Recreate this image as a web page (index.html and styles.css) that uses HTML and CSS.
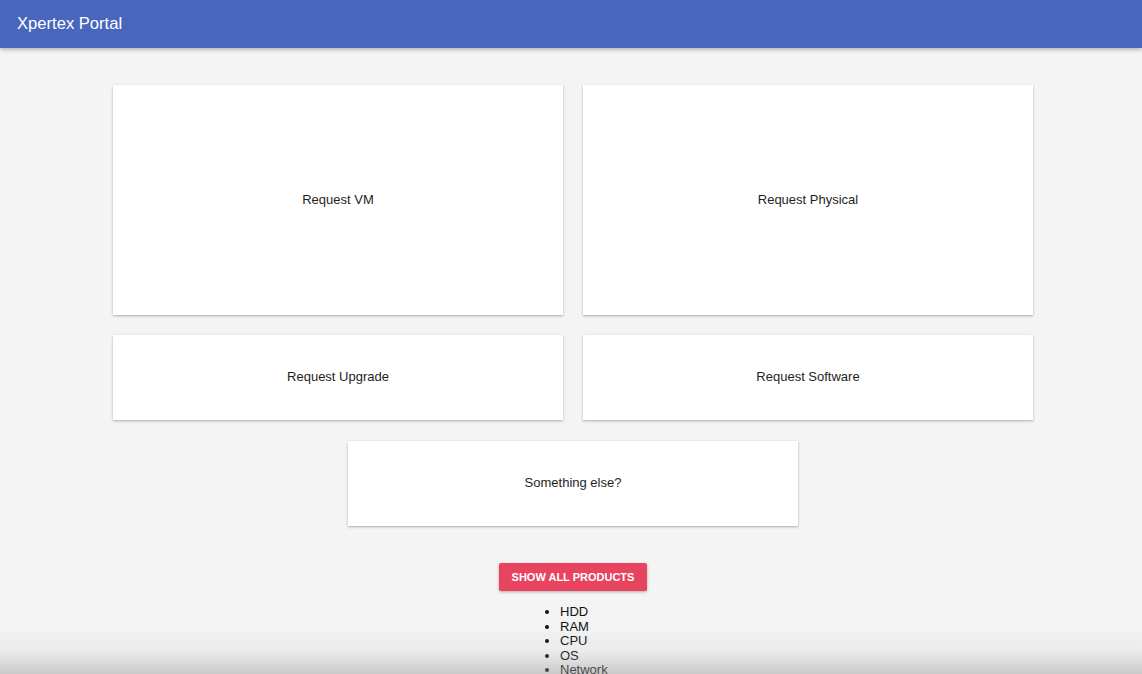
FILE: index.html
```html
<!DOCTYPE html>
<html>
<head>
<meta charset="utf-8">
<link rel="stylesheet" href="styles.css">
</head>
<body>
<header class="topbar"><span class="title">Xpertex Portal</span></header>
<main class="content">
  <div class="grid">
    <div class="card tall">Request VM</div>
    <div class="card tall">Request Physical</div>
    <div class="card short">Request Upgrade</div>
    <div class="card short">Request Software</div>
  </div>
  <div class="row-center">
    <div class="card short single">Something else?</div>
  </div>
  <div class="actions">
    <button class="btn">Show all products</button>
  </div>
  <ul class="products">
    <li>HDD</li>
    <li>RAM</li>
    <li>CPU</li>
    <li>OS</li>
    <li>Network</li>
  </ul>
</main>
<div class="fade"></div>
</body>
</html>
```
FILE: styles.css
```css
html, body {
  margin: 0;
  padding: 0;
  height: 100%;
  overflow: hidden;
}
body {
  background: #f4f4f4;
  font-family: "Liberation Sans", Arial, sans-serif;
  color: #1e1e1e;
}
.topbar {
  height: 48px;
  background: #4866bb;
  box-shadow: 0 2px 4px rgba(0,0,0,0.25);
  display: flex;
  align-items: center;
  padding-left: 17px;
  position: relative;
  z-index: 1;
}
.title {
  color: #ffffff;
  font-size: 16.6px;
  margin-top: -1px;
}
.content {
  width: 920px;
  margin-left: 113px;
  padding-top: 37px;
}
.grid {
  display: grid;
  grid-template-columns: 450px 450px;
  column-gap: 20px;
  row-gap: 20px;
}
.card {
  background: #ffffff;
  box-shadow: 0 1px 3px rgba(0,0,0,0.22), 0 1px 1px rgba(0,0,0,0.08);
  display: flex;
  align-items: center;
  justify-content: center;
  font-size: 13px;
  padding-bottom: 2px;
  box-sizing: border-box;
}
.tall { height: 230px; }
.short { height: 85px; }
.row-center {
  display: flex;
  justify-content: center;
  margin-top: 21px;
}
.single { width: 450px; }
.actions {
  display: flex;
  justify-content: center;
  margin-top: 37px;
}
.btn {
  background: #e8435f;
  color: #ffffff;
  border: none;
  border-radius: 2px;
  width: 148px;
  height: 28px;
  font-family: "Liberation Sans", Arial, sans-serif;
  font-size: 11px;
  font-weight: bold;
  text-transform: uppercase;
  box-shadow: 0 1px 3px rgba(0,0,0,0.3);
  padding: 0;
}
.products {
  margin: 14px 0 0 407px;
  padding-left: 40px;
  font-size: 13px;
  line-height: 14.5px;
  color: #111;
}
.fade {
  position: fixed;
  left: 0;
  right: 0;
  bottom: 0;
  height: 50px;
  background: linear-gradient(to bottom, rgba(170,170,170,0) 0%, rgba(170,170,170,0.12) 55%, rgba(150,150,150,0.45) 100%);
  pointer-events: none;
}
```
